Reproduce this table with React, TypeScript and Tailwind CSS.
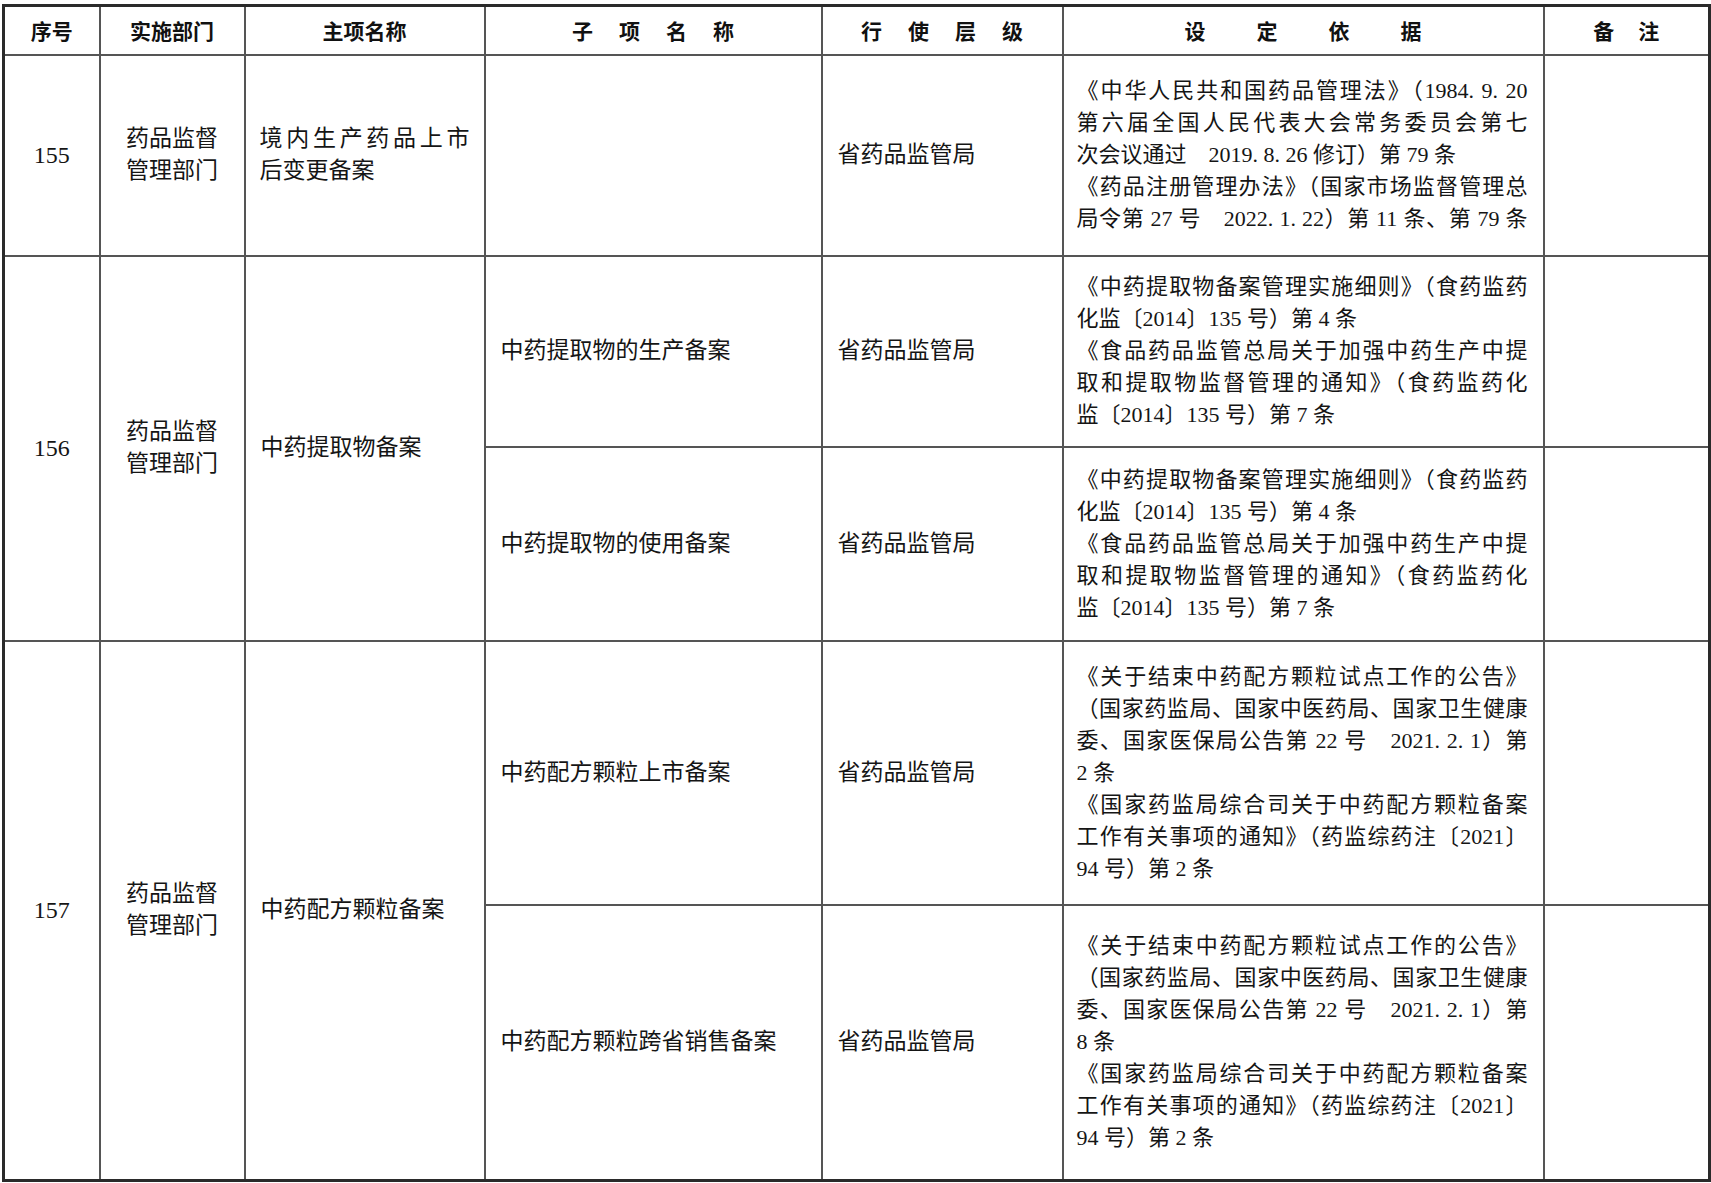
import React from "react";

type Line = { t: string; j: boolean };

const L = (t: string, j = true): Line => ({ t, j });

const body = "font-['Liberation_Serif','Noto_Sans_CJK_SC',serif]";
const head = "font-['Noto_Sans_CJK_SC','Liberation_Sans',sans-serif]";

const basis155 = [
  L("《中华人民共和国药品管理法》（1984. 9. 20"),
  L("第六届全国人民代表大会常务委员会第七"),
  L("次会议通过　2019. 8. 26 修订）第 79 条", false),
  L("《药品注册管理办法》（国家市场监督管理总"),
  L("局令第 27 号　2022. 1. 22）第 11 条、第 79 条"),
];

const basis156 = [
  L("《中药提取物备案管理实施细则》（食药监药"),
  L("化监〔2014〕135 号）第 4 条", false),
  L("《食品药品监管总局关于加强中药生产中提"),
  L("取和提取物监督管理的通知》（食药监药化"),
  L("监〔2014〕135 号）第 7 条", false),
];

const basis157 = (n: string) => [
  L("《关于结束中药配方颗粒试点工作的公告》"),
  L("（国家药监局、国家中医药局、国家卫生健康"),
  L("委、国家医保局公告第 22 号　2021. 2. 1）第"),
  L(`${n} 条`, false),
  L("《国家药监局综合司关于中药配方颗粒备案"),
  L("工作有关事项的通知》（药监综药注〔2021〕"),
  L("94 号）第 2 条", false),
];

const Lines = ({ lines }: { lines: Line[] }) => (
  <div>
    {lines.map((l, i) => (
      <div
        key={i}
        className={l.j ? "text-justify [text-align-last:justify]" : "text-left"}
      >
        {l.t}
      </div>
    ))}
  </div>
);

const Spaced = ({ text, gap }: { text: string; gap: string }) => (
  <span className={`inline-flex ${gap}`}>
    {text.split("").map((c, i) => (
      <span key={i}>{c}</span>
    ))}
  </span>
);

const Dept = () => (
  <div className="text-center">
    <div>药品监督</div>
    <div>管理部门</div>
  </div>
);

const td = "border-2 border-[#555] align-middle";
const th = "border-2 border-[#555] align-middle text-center font-semibold text-[21px] text-[#111]";
const num = `${td} text-center text-[24px]`;

export default function App() {
  return (
    <div className="bg-white w-[1711px] h-[1183px] pt-[4px] pl-[2px]">
      <table
        className={`${body} table-fixed border-collapse border-[3px] border-[#2a2a2a] w-[1706px] text-[#151515] leading-[32px]`}
      >
        <colgroup>
          <col className="w-[96px]" />
          <col className="w-[145px]" />
          <col className="w-[240px]" />
          <col className="w-[337px]" />
          <col className="w-[241px]" />
          <col className="w-[481px]" />
          <col className="w-[166px]" />
        </colgroup>
        <thead className={head}>
          <tr className="h-[49px]">
            <th className={th}>序号</th>
            <th className={th}>实施部门</th>
            <th className={th}>主项名称</th>
            <th className={th}>
              <Spaced text="子项名称" gap="gap-[26px]" />
            </th>
            <th className={th}>
              <Spaced text="行使层级" gap="gap-[26px]" />
            </th>
            <th className={th}>
              <Spaced text="设定依据" gap="gap-[51px]" />
            </th>
            <th className={th}>
              <Spaced text="备注" gap="gap-[24px]" />
            </th>
          </tr>
        </thead>
        <tbody className="text-[23px]">
          <tr className="h-[201px]">
            <td className={num}>155</td>
            <td className={td}>
              <Dept />
            </td>
            <td className={`${td} px-[14px]`}>
              <Lines lines={[L("境内生产药品上市"), L("后变更备案", false)]} />
            </td>
            <td className={td}></td>
            <td className={`${td} px-[15px]`}>省药品监管局</td>
            <td className={`${td} pl-[13px] pr-[15px] text-[22px]`}>
              <Lines lines={basis155} />
            </td>
            <td className={td}></td>
          </tr>

          <tr className="h-[191px]">
            <td rowSpan={2} className={num}>
              156
            </td>
            <td rowSpan={2} className={td}>
              <Dept />
            </td>
            <td rowSpan={2} className={`${td} border-l-[#8a8a8a] px-[15px]`}>
              中药提取物备案
            </td>
            <td className={`${td} px-[15px]`}>中药提取物的生产备案</td>
            <td className={`${td} px-[15px]`}>省药品监管局</td>
            <td className={`${td} pl-[13px] pr-[15px] text-[22px]`}>
              <Lines lines={basis156} />
            </td>
            <td className={td}></td>
          </tr>
          <tr className="h-[194px]">
            <td className={`${td} border-t-[#8a8a8a] px-[15px]`}>中药提取物的使用备案</td>
            <td className={`${td} border-t-[#8a8a8a] px-[15px]`}>省药品监管局</td>
            <td className={`${td} border-t-[#8a8a8a] pl-[13px] pr-[15px] text-[22px]`}>
              <Lines lines={basis156} />
            </td>
            <td className={`${td} border-t-[#8a8a8a]`}></td>
          </tr>

          <tr className="h-[264px]">
            <td rowSpan={2} className={num}>
              157
            </td>
            <td rowSpan={2} className={td}>
              <Dept />
            </td>
            <td rowSpan={2} className={`${td} border-l-[#8a8a8a] px-[15px]`}>
              中药配方颗粒备案
            </td>
            <td className={`${td} px-[15px]`}>中药配方颗粒上市备案</td>
            <td className={`${td} px-[15px]`}>省药品监管局</td>
            <td className={`${td} pl-[13px] pr-[15px] text-[22px]`}>
              <Lines lines={basis157("2")} />
            </td>
            <td className={td}></td>
          </tr>
          <tr className="h-[276px]">
            <td className={`${td} border-t-[#8a8a8a] px-[15px]`}>中药配方颗粒跨省销售备案</td>
            <td className={`${td} border-t-[#8a8a8a] px-[15px]`}>省药品监管局</td>
            <td className={`${td} border-t-[#8a8a8a] pl-[13px] pr-[15px] text-[22px]`}>
              <Lines lines={basis157("8")} />
            </td>
            <td className={`${td} border-t-[#8a8a8a]`}></td>
          </tr>
        </tbody>
      </table>
    </div>
  );
}
